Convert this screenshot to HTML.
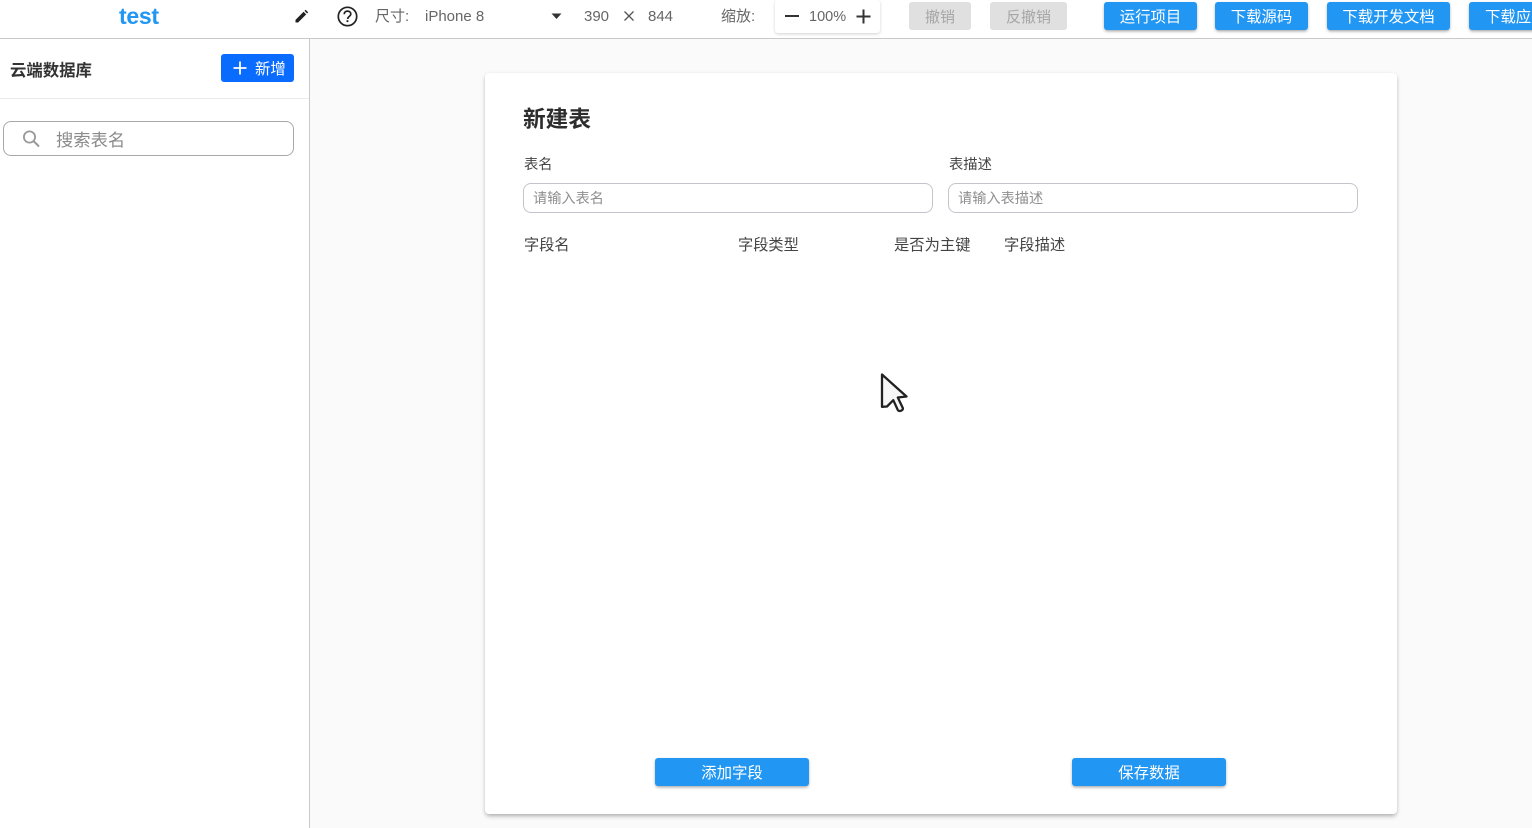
<!DOCTYPE html>
<html lang="zh">
<head>
<meta charset="utf-8">
<title>云端数据库</title>
<style>
html,body{margin:0;padding:0;width:1532px;height:828px;overflow:hidden;background:#fafafb;font-family:"Liberation Sans","Noto Sans CJK SC",sans-serif;color:#333}
.a{position:absolute;white-space:nowrap}
.btn{position:absolute;height:28px;line-height:31px;top:2px;background:#2196f3;color:#fff;border-radius:3px;text-align:center;font-size:15.4px;box-shadow:0 2px 3px -1px rgba(0,0,0,.3),0 1px 3px rgba(0,0,0,.14);white-space:nowrap;overflow:hidden}
.dis{background:#e0e0e0;color:#a6a6a6;box-shadow:none;font-size:15px}
.inp{position:absolute;box-sizing:border-box;background:#fff;border:1px solid #c4c4cc;border-radius:8px;color:#8f8f8f;white-space:nowrap}
</style>
</head>
<body>
<div class="a" style="left:0;top:0;width:1532px;height:39px;background:#fff;border-bottom:1px solid #c9c9c9;box-sizing:border-box"></div>
<div class="a" style="left:0;top:39px;width:310px;height:789px;background:#fff;border-right:1px solid #c9c9cc;box-sizing:border-box"></div>
<div class="a" style="left:0;top:98px;width:309px;height:1px;background:#ececf0"></div>

<div class="a" style="left:119px;top:3px;font-size:23px;line-height:26px;font-weight:700;color:#2196f3;letter-spacing:-.3px">test</div>
<svg class="a" style="left:293px;top:8px" width="17" height="17" viewBox="0 0 17 17"><path d="M2.5 14.5v-2.6L10.600 3.800l2.600 2.600L5.100 14.500z M11.500 2.900l1.100-1.100 2.600 2.600-1.100 1.100z" fill="#222"/></svg>
<svg class="a" style="left:336px;top:5px" width="23" height="23" viewBox="0 0 23 23"><circle cx="11.500" cy="11.500" r="9.200" fill="none" stroke="#222" stroke-width="1.700"/><path d="M8.200 9.200c0-2 1.500-3.100 3.300-3.100s3.300 1.100 3.300 2.900c0 2.400-3.100 2.400-3.100 5" fill="none" stroke="#222" stroke-width="1.700"/><rect x="10.500" y="15.200" width="1.900" height="1.900" fill="#222"/></svg>
<div class="a" style="left:375px;top:7px;font-size:15px;line-height:20px;color:#666">尺寸:</div>
<div class="a" style="left:425px;top:7px;font-size:15px;line-height:20px;color:#666">iPhone 8</div>
<svg class="a" style="left:550px;top:12px" width="13" height="8" viewBox="0 0 13 8"><path d="M1.500 1.500h10L6.500 7z" fill="#333"/></svg>
<div class="a" style="left:584px;top:7px;font-size:15px;line-height:20px;color:#666">390</div>
<svg class="a" style="left:622px;top:9px" width="14" height="14" viewBox="0 0 14 14"><path d="M2.500 2.500l9 9M11.500 2.500l-9 9" stroke="#555" stroke-width="1.300" fill="none"/></svg>
<div class="a" style="left:648px;top:7px;font-size:15px;line-height:20px;color:#666">844</div>
<div class="a" style="left:721px;top:7px;font-size:15px;line-height:20px;color:#666">缩放:</div>
<div class="a" style="left:775px;top:0;width:105px;height:33px;background:#fff;border-radius:3px;box-shadow:0 1px 3px rgba(0,0,0,.18)"></div>
<div class="a" style="left:785px;top:15px;width:14px;height:2px;background:#333"></div>
<div class="a" style="left:809px;top:7px;font-size:14.500px;line-height:20px;color:#666">100%</div>
<svg class="a" style="left:856px;top:9px" width="15" height="15" viewBox="0 0 15 15"><path d="M0.500 7.500h14M7.500 0.500v14" stroke="#333" stroke-width="2" fill="none"/></svg>
<div class="btn dis" style="left:909px;width:62px">撤销</div>
<div class="btn dis" style="left:990px;width:77px">反撤销</div>
<div class="btn" style="left:1104px;width:93px">运行项目</div>
<div class="btn" style="left:1215px;width:93px">下载源码</div>
<div class="btn" style="left:1327px;width:123px">下载开发文档</div>
<div class="btn" style="left:1469px;width:80px;text-align:left;padding-left:16px;box-sizing:border-box">下载应用</div>

<div class="a" style="left:10px;top:61px;font-size:16.400px;line-height:21px;font-weight:700;color:#333">云端数据库</div>
<div class="a" style="left:221px;top:54px;width:73px;height:28px;background:#0a6cff;border-radius:3px"></div>
<svg class="a" style="left:232px;top:60px" width="16" height="16" viewBox="0 0 16 16"><path d="M1.500 8h13M8 1.500v13" stroke="#fff" stroke-width="1.800" fill="none"/></svg>
<div class="a" style="left:255px;top:60px;font-size:15.400px;line-height:20px;color:#fff">新增</div>
<div class="inp" style="left:3px;top:121px;width:291px;height:35px;border-color:#a8a8a8"></div>
<svg class="a" style="left:21px;top:129px" width="20" height="20" viewBox="0 0 20 20"><circle cx="8.500" cy="8" r="5.600" fill="none" stroke="#999" stroke-width="1.800"/><path d="M12.700 12.200l5.300 5.300" stroke="#999" stroke-width="2" fill="none"/></svg>
<div class="a" style="left:56px;top:129px;font-size:17.300px;line-height:22px;color:#8a8a8a">搜索表名</div>

<div class="a" style="left:485px;top:73px;width:912px;height:741px;background:#fff;border-radius:4px;box-shadow:0 3px 5px -1px rgba(0,0,0,.25),0 1px 4px rgba(0,0,0,.1)"></div>
<div class="a" style="left:523px;top:105px;font-size:22.700px;line-height:29px;font-weight:700;color:#2d2d2d">新建表</div>
<div class="a" style="left:524px;top:155px;font-size:14.300px;line-height:20px;color:#444">表名</div>
<div class="a" style="left:949px;top:155px;font-size:14.300px;line-height:20px;color:#444">表描述</div>
<div class="inp" style="left:523px;top:183px;width:410px;height:30px"></div>
<div class="inp" style="left:948px;top:183px;width:410px;height:30px"></div>
<div class="a" style="left:533px;top:189px;font-size:14.200px;line-height:20px;color:#8f8f8f">请输入表名</div>
<div class="a" style="left:958px;top:189px;font-size:14.200px;line-height:20px;color:#8f8f8f">请输入表描述</div>
<div class="a" style="left:524px;top:235px;font-size:15.200px;line-height:21px;color:#444">字段名</div>
<div class="a" style="left:738px;top:235px;font-size:15.200px;line-height:21px;color:#444">字段类型</div>
<div class="a" style="left:894px;top:235px;font-size:15.300px;line-height:21px;color:#444">是否为主键</div>
<div class="a" style="left:1004px;top:235px;font-size:15.300px;line-height:21px;color:#444">字段描述</div>

<svg class="a" style="left:878px;top:370px" width="32" height="44" viewBox="0 0 32 44"><path d="M4 4.500L28.500 26.500L19.800 27.500L24.800 38C25.700 40.300 21 42.300 19.800 40L15.300 30.200L9 36.500L4 36.800Z" fill="#f7f7f7" stroke="#222" stroke-width="2.300" stroke-linejoin="round"/></svg>

<div class="btn" style="left:655px;top:758px;width:154px">添加字段</div>
<div class="btn" style="left:1072px;top:758px;width:154px">保存数据</div>
</body>
</html>
